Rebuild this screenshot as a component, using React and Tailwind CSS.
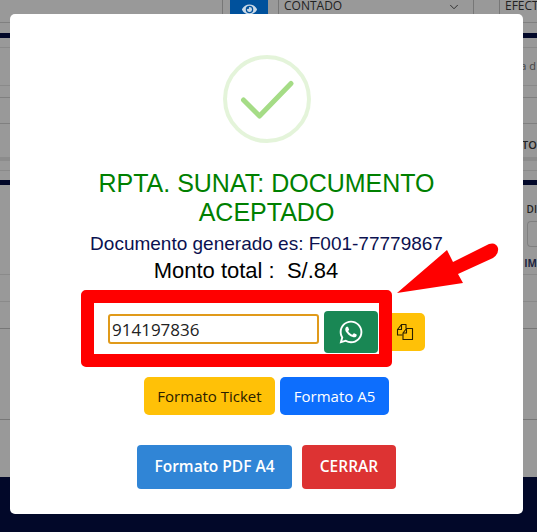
import { FaEye, FaWhatsapp } from 'react-icons/fa'
import { ChevronDown } from 'lucide-react'

const uiFont = "font-['Open_Sans','Noto_Sans',sans-serif]"

function BackgroundPage() {
  return (
    <div className={`flex h-full flex-col text-[#222] ${uiFont}`}>
      <div className="flex h-[23px] shrink-0 border-b border-[#808080] pl-[222px]">
        <div className="flex h-full shrink-0 items-start border-l border-[#777] pl-[7px]">
          <div className="flex h-[18px] w-[38px] items-center justify-center bg-[#00519c] text-[#c9d8e6]">
            <FaEye size={15} />
          </div>
        </div>
        <div className="ml-[10px] flex h-[14px] w-[196px] shrink-0 items-start justify-between border-l border-r border-[#777] pl-[5px] pr-[12px] text-[12px] leading-[12px]">
          <span>CONTADO</span>
          <ChevronDown size={14} strokeWidth={1.5} />
        </div>
        <div className="ml-[25px] h-[14px] shrink-0 border-l border-[#777] pl-[5px] text-[12px] leading-[12px]">EFECTI</div>
      </div>
      <div className="mt-[10px] h-[5px] shrink-0 bg-[#020829]" />
      <div className="mt-[9px] flex h-[39px] shrink-0 items-center justify-end border-t border-b border-[#8a8a8a] pr-[1px] text-[11px] text-[#444]">a d</div>
      <div className="mt-[11px] h-[27px] shrink-0 border-t border-b border-[#808080]" />
      <div className="flex h-[33px] shrink-0 items-end justify-end text-[11px] font-semibold leading-[24px]">CTO</div>
      <div className="h-[4px] shrink-0 bg-[#8c8c8c]" />
      <div className="mt-[9px] h-px shrink-0 bg-[#8a8a8a]" />
      <div className="mt-[9px] h-[5px] shrink-0 bg-[#020829]" />
      <div className="flex h-[89px] shrink-0 flex-col items-end">
        <span className="mt-[18px] text-[10px] font-semibold leading-[12px]">DI</span>
        <div className="mt-[6px] h-[26px] w-[10px] rounded-l border border-r-0 border-[#808080]" />
        <span className="mt-[10px] text-[10px] font-bold leading-[12px] text-[#1c2440]">IM</span>
      </div>
      <div className="h-[27px] shrink-0 border-t border-[#8a8a8a]" />
      <div className="h-[27px] shrink-0 border-t border-[#8a8a8a]" />
      <div className="h-[91px] shrink-0 border-t border-[#777]" />
      <div className="h-[58px] shrink-0 border-t border-[#777]" />
      <div className="flex-1 bg-[#020829]" />
    </div>
  )
}

function CheckRing() {
  return (
    <svg width="88" height="90" viewBox="0 0 88 90" fill="none" className="block">
      <circle cx="44" cy="45" r="42" stroke="#a5dc86" strokeOpacity="0.3" strokeWidth="4" />
      <path d="M20.5 46 L36.5 62 L68 29.5" stroke="#a5dc86" strokeWidth="5" strokeLinecap="round" strokeLinejoin="round" />
    </svg>
  )
}

function CopyIcon() {
  return (
    <svg width="18" height="18" viewBox="0 0 18 18" fill="none" stroke="#2a2000" strokeWidth="1.1" strokeLinejoin="round" className="block">
      <path d="M6.5 12H1.5V6.5L5.5 1.5H10V5.5" />
      <path d="M5.5 1.5V6.5H1.5" />
      <path d="M7 16.5V10L10.5 5.5H16.5V16.5Z" />
      <path d="M10.5 5.5V10H7" />
    </svg>
  )
}

export default function App() {
  return (
    <div className="relative h-[532px] w-[537px] overflow-hidden bg-[#999]">
      <BackgroundPage />

      <div className="absolute left-[10px] top-[14px] flex h-[500px] w-[513px] flex-col items-center rounded-[5px] bg-white">
        <div className="mt-[40px]">
          <CheckRing />
        </div>
        <h2 className="mt-[25px] w-[400px] text-center font-['Liberation_Sans',sans-serif] text-[25px] font-normal leading-[29px] text-[#008000]">
          RPTA. SUNAT: DOCUMENTO ACEPTADO
        </h2>
        <p className="mt-[4px] font-['Liberation_Sans',sans-serif] text-[19px] leading-[26px] text-[#0b1150]">
          Documento generado es: F001-77779867
        </p>
        <p className="pr-[41px] font-['Liberation_Sans',sans-serif] text-[22px] leading-[28px] text-black">
          Monto total :&nbsp; S/.84
        </p>

        <div className="mt-[26px] flex items-start">
          <input
            readOnly
            value="914197836"
            className={`mt-[3px] h-[30px] w-[211px] rounded-[3px] border-2 border-[#e09a1a] pl-[2px] text-[17px] text-[#222] outline-none ${uiFont}`}
          />
          <button className="ml-[5px] flex h-[42px] w-[54px] items-center justify-center rounded-[4px] bg-[#198754] text-white">
            <FaWhatsapp size={26} />
          </button>
          <button className="ml-[6px] mt-[2px] flex h-[38px] w-[41px] items-center justify-center rounded-[5px] bg-[#ffc107]">
            <CopyIcon />
          </button>
        </div>

        <div className={`mt-[24px] flex gap-[5px] text-[15px] ${uiFont}`}>
          <button className="h-[38px] w-[131px] rounded-[5px] bg-[#ffc107] text-[#2a2000]">Formato Ticket</button>
          <button className="h-[38px] w-[109px] rounded-[5px] bg-[#0d6efd] text-white">Formato A5</button>
        </div>

        <div className={`mt-[30px] flex gap-[10px] text-[15.5px] font-semibold text-white ${uiFont}`}>
          <button className="h-[44px] w-[155px] rounded-[4px] bg-[#3085d6]">Formato PDF A4</button>
          <button className="h-[44px] w-[94px] rounded-[4px] bg-[#dd3333]">CERRAR</button>
        </div>
      </div>

      {/* annotation drawn over the dialog */}
      <div className="pointer-events-none absolute left-[81px] top-[290px] h-[77px] w-[311px] rounded-[5px] border-[13px] border-[#ff0000]" />
      <svg width="537" height="532" viewBox="0 0 537 532" className="pointer-events-none absolute left-0 top-0">
        <path d="M397 293 L447 250 L453 262 L489 244 Q496 242 498 248 Q499 254 493 258 L458 274 L463 283 Z" fill="#ff0000" />
      </svg>
    </div>
  )
}
